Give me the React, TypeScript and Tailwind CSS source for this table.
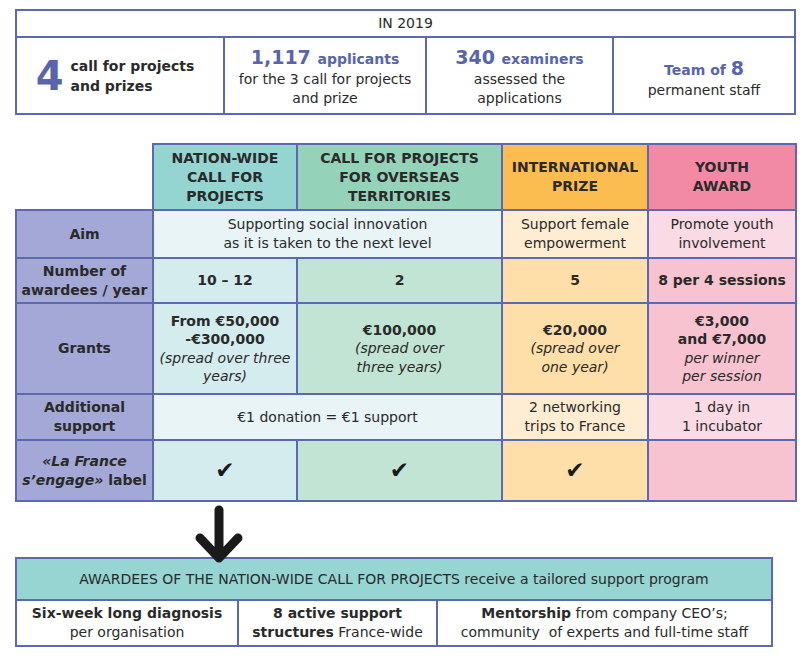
const cell = "border-2 border-[#5c68b1] text-center align-middle p-0"

function Check() {
  return <span className="text-[23px] leading-none text-[#1a1a1a]">✔</span>
}

export default function App() {
  return (
    <div className="w-[810px] h-[658px] bg-white text-[#2a2a2a] font-['DejaVu_Sans',sans-serif] pt-[9px]">
      {/* In 2019 */}
      <table className="ml-[15px] w-[779px] table-fixed border-collapse text-[14px]">
        <colgroup>
          <col className="w-[208px]" />
          <col className="w-[202px]" />
          <col className="w-[187px]" />
          <col className="w-[182px]" />
        </colgroup>
        <tbody>
          <tr className="h-[27px]">
            <td colSpan={4} className={cell}>IN 2019</td>
          </tr>
          <tr className="h-[77px]">
            <td className={cell}>
              <div className="flex items-center justify-center gap-[7px] pt-[1px] pr-[10px]">
                <span className="text-[40px] font-bold leading-none text-[#5864ad]">4</span>
                <span className="text-left text-[14px] font-bold leading-[20px]">
                  call for projects
                  <br />
                  and prizes
                </span>
              </div>
            </td>
            <td className={cell}>
              <div className="pt-[6px] leading-[19.5px]">
                <span className="text-[19px] font-bold text-[#5864ad]">1,117 </span>
                <span className="font-bold text-[#5864ad]">applicants</span>
                <br />
                for the 3 call for projects
                <br />
                and prize
              </div>
            </td>
            <td className={cell}>
              <div className="pt-[6px] leading-[19.5px]">
                <span className="text-[19px] font-bold text-[#5864ad]">340 </span>
                <span className="font-bold text-[#5864ad]">examiners</span>
                <br />
                assessed the
                <br />
                applications
              </div>
            </td>
            <td className={cell}>
              <div className="pt-[6px] leading-[20px]">
                <span className="font-bold text-[#5864ad]">Team of </span>
                <span className="text-[19px] font-bold text-[#5864ad]">8</span>
                <br />
                permanent staff
              </div>
            </td>
          </tr>
        </tbody>
      </table>

      {/* Comparison table */}
      <table className="ml-[15px] mt-[28px] w-[780px] table-fixed border-collapse text-[14px] leading-[19px]">
        <colgroup>
          <col className="w-[137px]" />
          <col className="w-[144px]" />
          <col className="w-[205px]" />
          <col className="w-[146px]" />
          <col className="w-[148px]" />
        </colgroup>
        <tbody>
          <tr className="h-[66px] font-bold">
            <td className="p-0 border-0" />
            <td className={`${cell} bg-[#94d5d1]`}>
              NATION-WIDE
              <br />
              CALL FOR
              <br />
              PROJECTS
            </td>
            <td className={`${cell} bg-[#94d2ba]`}>
              CALL FOR PROJECTS
              <br />
              FOR OVERSEAS
              <br />
              TERRITORIES
            </td>
            <td className={`${cell} bg-[#fbbd4f]`}>
              INTERNATIONAL
              <br />
              PRIZE
            </td>
            <td className={`${cell} bg-[#f28aa6]`}>
              YOUTH
              <br />
              AWARD
            </td>
          </tr>
          <tr className="h-[48px]">
            <td className={`${cell} bg-[#a3a8d6] font-bold`}>Aim</td>
            <td colSpan={2} className={`${cell} bg-[#e8f4f6]`}>
              Supporting social innovation
              <br />
              as it is taken to the next level
            </td>
            <td className={`${cell} bg-[#feedd3]`}>
              Support female
              <br />
              empowerment
            </td>
            <td className={`${cell} bg-[#fadae4]`}>
              Promote youth
              <br />
              involvement
            </td>
          </tr>
          <tr className="h-[45px] font-bold">
            <td className={`${cell} bg-[#a3a8d6]`}>
              Number of
              <br />
              awardees / year
            </td>
            <td className={`${cell} bg-[#d5ecee]`}>10 – 12</td>
            <td className={`${cell} bg-[#c2e4d4]`}>2</td>
            <td className={`${cell} bg-[#fedea9]`}>5</td>
            <td className={`${cell} bg-[#f8c3d1]`}>8 per 4 sessions</td>
          </tr>
          <tr className="h-[91px] leading-[18.5px]">
            <td className={`${cell} bg-[#a3a8d6] font-bold`}>Grants</td>
            <td className={`${cell} bg-[#d5ecee]`}>
              <b>
                From €50,000
                <br />
                -€300,000
              </b>
              <br />
              <i>
                (spread over three
                <br />
                years)
              </i>
            </td>
            <td className={`${cell} bg-[#c2e4d4]`}>
              <b>€100,000</b>
              <br />
              <i>
                (spread over
                <br />
                three years)
              </i>
            </td>
            <td className={`${cell} bg-[#fedea9]`}>
              <b>€20,000</b>
              <br />
              <i>
                (spread over
                <br />
                one year)
              </i>
            </td>
            <td className={`${cell} bg-[#f8c3d1]`}>
              <b>
                €3,000
                <br />
                and €7,000
              </b>
              <br />
              <i>
                per winner
                <br />
                per session
              </i>
            </td>
          </tr>
          <tr className="h-[46px]">
            <td className={`${cell} bg-[#a3a8d6] font-bold`}>
              Additional
              <br />
              support
            </td>
            <td colSpan={2} className={`${cell} bg-[#e8f4f6]`}>
              €1 donation = €1 support
            </td>
            <td className={`${cell} bg-[#feedd3]`}>
              2 networking
              <br />
              trips to France
            </td>
            <td className={`${cell} bg-[#fadae4]`}>
              1 day in
              <br />1 incubator
            </td>
          </tr>
          <tr className="h-[61px]">
            <td className={`${cell} bg-[#a3a8d6] font-bold`}>
              <i>«La France</i>
              <br />
              <i>s’engage»</i> label
            </td>
            <td className={`${cell} bg-[#d5ecee]`}>
              <Check />
            </td>
            <td className={`${cell} bg-[#c2e4d4]`}>
              <Check />
            </td>
            <td className={`${cell} bg-[#fedea9]`}>
              <Check />
            </td>
            <td className={`${cell} bg-[#f8c3d1]`} />
          </tr>
        </tbody>
      </table>

      {/* Arrow + support program */}
      <div className="relative pt-[55px]">
        <svg
          className="absolute left-[193px] top-[0px] z-10"
          width="52"
          height="64"
          viewBox="0 0 52 64"
        >
          <path
            d="M26 8 V56 M7 36 L26 56 L45 36"
            fill="none"
            stroke="#1a1a1a"
            strokeWidth="9"
            strokeLinecap="round"
            strokeLinejoin="round"
          />
        </svg>
        <table className="ml-[15px] w-[756px] table-fixed border-collapse text-[14px] leading-[19px]">
          <colgroup>
            <col className="w-[222px]" />
            <col className="w-[199px]" />
            <col className="w-[335px]" />
          </colgroup>
          <tbody>
            <tr className="h-[42px]">
              <td colSpan={3} className={`${cell} bg-[#96d5d1]`}>
                AWARDEES OF THE NATION-WIDE CALL FOR PROJECTS receive a tailored support program
              </td>
            </tr>
            <tr className="h-[46px]">
              <td className={cell}>
                <b>Six-week long diagnosis</b>
                <br />
                per organisation
              </td>
              <td className={cell}>
                <b>8 active support</b>
                <br />
                <b>structures</b> France-wide
              </td>
              <td className={cell}>
                <b>Mentorship</b> from company CEO’s;
                <br />
                community&nbsp; of experts and full-time staff
              </td>
            </tr>
          </tbody>
        </table>
      </div>
    </div>
  )
}
